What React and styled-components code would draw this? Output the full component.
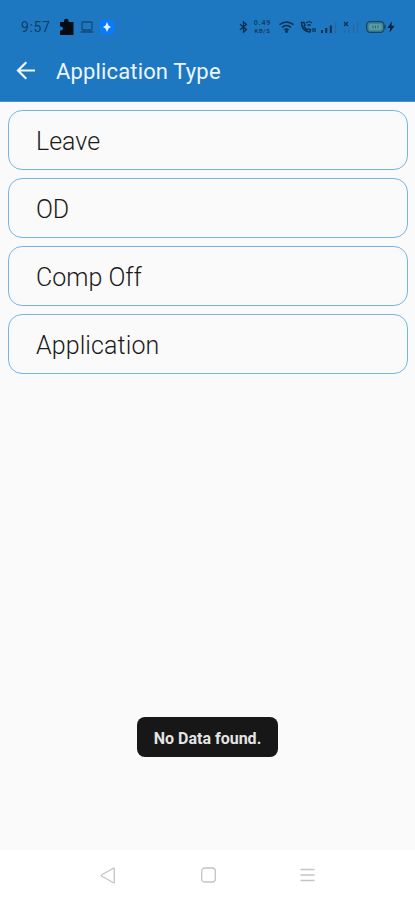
import React from "react";
import styled, { createGlobalStyle } from "styled-components";

const GlobalStyle = createGlobalStyle`
  * { box-sizing: border-box; }
  body { margin: 0; background: #fafafa; font-family: Roboto, sans-serif; }
`;

const Screen = styled.div`
  display: flex;
  flex-direction: column;
  height: 900px;
  background: #fafafa;
`;

const Header = styled.header`
  height: 102px;
  flex: none;
  background: #1e78c1;
  border-bottom: 1px solid #4a8fcc;
`;

const StatusBar = styled.div`
  display: flex;
  align-items: center;
  height: 40px;
  padding: 13px 20px 0 21px;
`;

const Clock = styled.span`
  width: 38px;
  font-size: 14px;
  line-height: 26px;
  letter-spacing: 0.6px;
  color: #123e63;
`;

const Notifications = styled.div`
  display: flex;
  align-items: center;
  gap: 6px;
  flex: 1;
`;

const SystemIcons = styled.div`
  display: flex;
  align-items: center;
`;

const Icon = styled.svg`
  display: block;
  flex: none;
  overflow: visible;
  margin-right: ${(p) => p.$gap || 0}px;
`;

const Speed = styled.div`
  display: flex;
  flex-direction: column;
  align-items: center;
  width: 20px;
  margin-right: 6px;
  font-weight: 700;
  color: #123e63;
`;

const Rate = styled.span`
  font-size: 7px;
  line-height: 8px;
  height: 8px;
  letter-spacing: 0.8px;
`;

const Unit = styled.span`
  font-size: 6px;
  line-height: 7px;
  height: 7px;
  letter-spacing: 0.6px;
`;

const AppBar = styled.div`
  display: flex;
  align-items: center;
  height: 61px;
  padding-left: 16px;
`;

const BackButton = styled.button`
  width: 40px;
  padding: 0;
  border: 0;
  background: none;
`;

const Title = styled.h1`
  margin: 1px 0 0;
  font-size: 22px;
  font-weight: 450;
  letter-spacing: 0.15px;
  color: #edf5fc;
`;

const List = styled.main`
  display: flex;
  flex-direction: column;
  gap: 8px;
  flex: 1;
  padding: 8px 7px 0 8px;
`;

const Option = styled.div`
  display: flex;
  align-items: center;
  height: 60px;
  padding: 2px 0 0 27px;
  border: 1px solid #74b4e7;
  border-radius: 14px;
  font-size: 25px;
  font-weight: 350;
  letter-spacing: ${(p) => p.$tracking}px;
  color: #1a1a1a;
`;

const Toast = styled.div`
  align-self: center;
  display: flex;
  align-items: center;
  justify-content: center;
  width: 141px;
  height: 40px;
  margin-bottom: 93px;
  padding-top: 2px;
  border-radius: 8px;
  background: #171717;
  color: #e4e4e4;
  font-size: 16px;
  font-weight: 700;
  white-space: nowrap;
`;

const NavBar = styled.nav`
  display: flex;
  align-items: center;
  justify-content: space-between;
  height: 50px;
  flex: none;
  padding: 0 100px;
  background: #fff;
`;

const options = [
  ["Leave", 0],
  ["OD", -0.3],
  ["Comp Off", 0],
  ["Application", 0.1],
];

const Ink = "#0b2f50";

export default function App() {
  return (
    <>
      <GlobalStyle />
      <Screen>
        <Header>
          <StatusBar>
            <Clock>9:57</Clock>
            <Notifications>
              <Icon width="15" height="16" viewBox="0 0 15 16">
                <path fill="#020a12" d="M1 3H5V2A2.3 2.3 0 0 1 9.600 2V3H14.500V16H1V11.500H2A2 2 0 0 0 2 7.500H1Z" />
              </Icon>
              <Icon width="14" height="12" viewBox="0 0 14 12" fill="none" stroke="#174a76" strokeWidth="1.300">
                <rect x="2" y="1" width="10" height="8" rx="1" />
                <path d="M0.500 11H13.500M4 9V11M10 9V11" />
              </Icon>
              <Icon width="14" height="14" viewBox="0 0 14 14">
                <rect width="14" height="14" rx="3" fill="#087bff" />
                <path fill="#e4f3ff" d="M7 2L8.500 5.500L11 7L8.500 8.500L7 12L5.500 8.500L3 7L5.500 5.500Z" />
              </Icon>
            </Notifications>
            <SystemIcons>
              <Icon $gap={5} width="9" height="12" viewBox="0 0 9 12" fill="none" stroke={Ink} strokeWidth="1.300">
                <path d="M1 3.300L7.500 8.500L4.500 11V1L7.500 3.500L1 8.700" />
              </Icon>
              <Speed>
                <Rate>0.49</Rate>
                <Unit>KB/S</Unit>
              </Speed>
              <Icon $gap={6} width="15" height="12" viewBox="0 0 15 12" fill="none" stroke={Ink} strokeWidth="1.500">
                <path d="M0.500 3.700Q7.500 -1.800 14.500 3.700M3 6.300Q7.500 2.800 12 6.300M5.300 8.800Q7.500 7.200 9.700 8.800" />
                <circle cx="7.500" cy="10.500" r="0.700" />
              </Icon>
              <Icon $gap={5} width="16" height="12" viewBox="0 0 16 12" fill="none" stroke={Ink} strokeWidth="1.200">
                <path strokeWidth="1.500" d="M1.500 1.500Q1.500 10 10 11L10.500 8.500L8 8L7 9Q5 7.500 4 5L5 4L4 1.500Z" />
                <path d="M6 2Q9 -0.500 12 2M7.500 4.500Q9 3 10.500 4.500M13 7V11M15 7V11" />
              </Icon>
              <Icon $gap={6} width="16" height="12" viewBox="0 0 16 12" strokeWidth="2">
                <path stroke={Ink} d="M1 9V12M5.300 7V12M9.800 4.500V12" />
                <path stroke="#2869a0" strokeWidth="1.300" d="M14.500 1V12" />
              </Icon>
              <Icon $gap={7} width="16" height="12" viewBox="0 0 16 12" strokeWidth="1.300">
                <path stroke={Ink} d="M1 1L5 5M5 1L1 5" />
                <path stroke="#2869a0" d="M1.500 9V12M6 7V12M10.500 4V12M14.500 1V12" />
              </Icon>
              <Icon $gap={1.5} width="20" height="12" viewBox="0 0 20 12">
                <rect x="0.700" y="0.700" width="17.300" height="10.600" rx="3.500" fill="#3e8498" stroke="#174565" strokeWidth="1.300" />
                <rect x="3" y="3" width="12.700" height="6" rx="2" fill="#5c9ba2" />
                <path stroke="#174565" strokeWidth="1.300" d="M19 4V8" />
                <path stroke="#2b677e" d="M7 4.500V7.500M9.500 4.500V7.500M12 4.500V7.500" />
              </Icon>
              <Icon width="8" height="12" viewBox="0 0 8 12">
                <path fill="#051d33" d="M4.800 0.500L0.500 7H3.200L2.600 11.500L7.500 4.800H4.500Z" />
              </Icon>
            </SystemIcons>
          </StatusBar>
          <AppBar>
            <BackButton aria-label="Back">
              <Icon width="20" height="18" viewBox="0 0 20 18" fill="none" stroke="#eef6fd" strokeWidth="2.200">
                <path d="M19 8.500H2M10.300 0.300L2 8.500L10.300 16.700" />
              </Icon>
            </BackButton>
            <Title>Application Type</Title>
          </AppBar>
        </Header>
        <List>
          {options.map(([label, tracking]) => (
            <Option key={label} $tracking={tracking}>{label}</Option>
          ))}
        </List>
        <Toast role="status">No Data found.</Toast>
        <NavBar>
          <Icon width="16" height="17" viewBox="0 0 16 17" fill="none" stroke="#c4c4c4" strokeWidth="1.300">
            <path strokeLinejoin="round" d="M14.300 1.500V15.500Q14.300 16.300 13.400 15.800L1.800 9.300Q0.700 8.500 1.800 7.700L13.400 1.200Q14.300 0.700 14.300 1.500Z" />
          </Icon>
          <Icon width="15" height="16" viewBox="0 0 15 16" fill="none" stroke="#c4c4c4" strokeWidth="1.300">
            <rect x="0.700" y="1" width="13.600" height="14" rx="3" />
          </Icon>
          <Icon width="15" height="14" viewBox="0 0 15 14" stroke="#c4c4c4" strokeWidth="1.400">
            <path d="M0.500 1.500H14.500M0.500 7H14.500M0.500 12.500H14.500" />
          </Icon>
        </NavBar>
      </Screen>
    </>
  );
}
